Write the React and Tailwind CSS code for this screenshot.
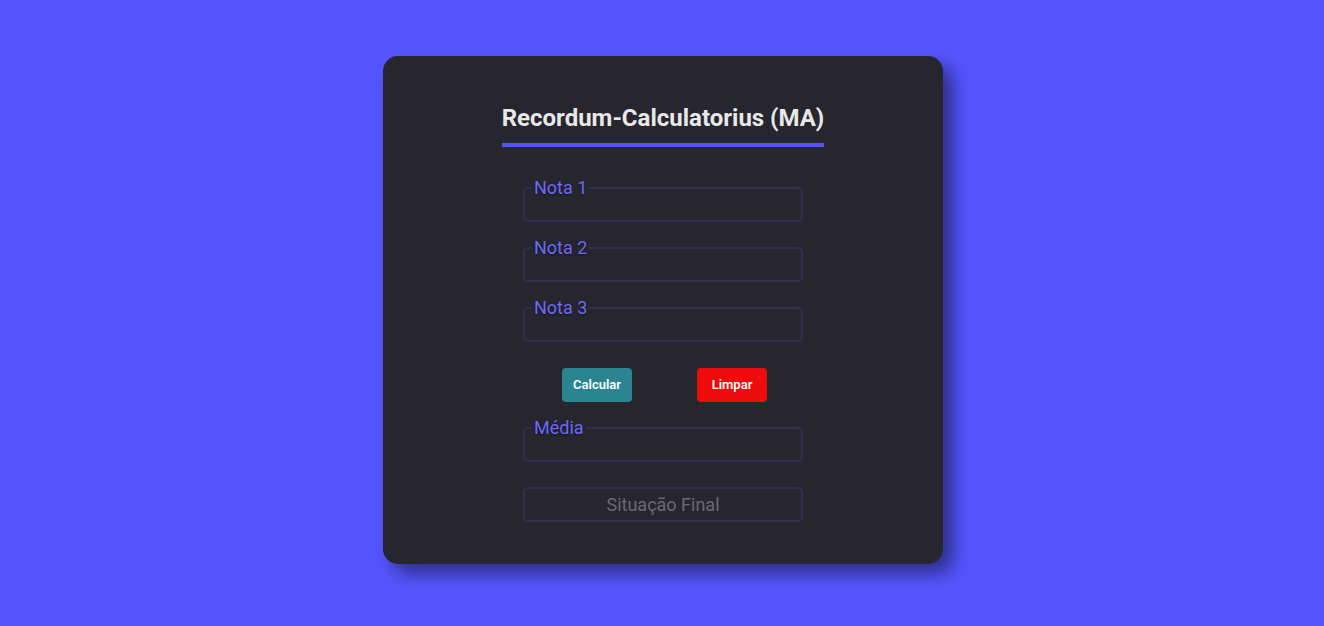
import { useState } from "react";

// --- Campo com legenda ---
const Campo = ({ label, value, onChange }) => (
  <fieldset className="w-[280px] border-2 border-[#302f50] rounded-[5px] px-0 m-0">
    <legend className="ml-[7px] px-[2px] text-[18px] leading-[21px] text-[#6d6af7] [text-shadow:0_1px_2px_rgba(0,0,0,0.5)]">
      {label}
    </legend>
    <input
      type="text"
      value={value}
      onChange={onChange}
      className="block w-full h-[22px] bg-transparent outline-none px-2 text-[16px] text-[#e5e5e5]"
    />
  </fieldset>
);

const App = () => {
  const [notas, setNotas] = useState({ n1: "", n2: "", n3: "" });
  const [media, setMedia] = useState("");
  const [situacao, setSituacao] = useState("");

  const handleChange = (key) => (e) => setNotas((prev) => ({ ...prev, [key]: e.target.value }));

  const calcular = () => {
    const vals = [notas.n1, notas.n2, notas.n3].map((v) => parseFloat(v.replace(",", ".")) || 0);
    const m = (vals[0] + vals[1] + vals[2]) / 3;
    setMedia(m.toFixed(1));
    setSituacao(m >= 7 ? "Aprovado" : m >= 5 ? "Recuperação" : "Reprovado");
  };

  const limpar = () => {
    setNotas({ n1: "", n2: "", n3: "" });
    setMedia("");
    setSituacao("");
  };

  return (
    <div className="min-h-screen bg-[#5555ff] font-['Roboto',sans-serif] pt-[56px]">
      <div className="mx-auto translate-x-[1px] w-[560px] h-[508px] bg-[#27262f] rounded-[15px] shadow-[10px_10px_18px_rgba(0,0,0,0.45)] pt-[48px] flex flex-col items-center">
        <h1 className="text-[24px] leading-[28px] font-bold text-[#e8e8e8] pb-[11px] border-b-4 border-[#5454ff]">
          Recordum-Calculatorius (MA)
        </h1>

        <div className="mt-[30px] flex flex-col gap-[15px]">
          <Campo label="Nota 1" value={notas.n1} onChange={handleChange("n1")} />
          <Campo label="Nota 2" value={notas.n2} onChange={handleChange("n2")} />
          <Campo label="Nota 3" value={notas.n3} onChange={handleChange("n3")} />
        </div>

        <div className="mt-[26px] w-[280px] flex pl-[39px] gap-[65px]">
          <button
            onClick={calcular}
            className="w-[70px] h-[34px] rounded-[4px] bg-[#2a8591] text-white text-[13px] font-semibold"
          >
            Calcular
          </button>
          <button
            onClick={limpar}
            className="w-[70px] h-[34px] rounded-[4px] bg-[#ee0b0b] text-white text-[13px] font-semibold"
          >
            Limpar
          </button>
        </div>

        <div className="mt-[15px]">
          <Campo label="Média" value={media} onChange={(e) => setMedia(e.target.value)} />
        </div>

        <input
          type="text"
          readOnly
          value={situacao}
          placeholder="Situação Final"
          className="mt-[25px] w-[280px] h-[35px] border-2 border-[#302f50] rounded-[5px] bg-transparent outline-none text-center text-[18px] text-[#e5e5e5] placeholder:text-[#6b6a72]"
        />
      </div>
    </div>
  );
};

export default App;
